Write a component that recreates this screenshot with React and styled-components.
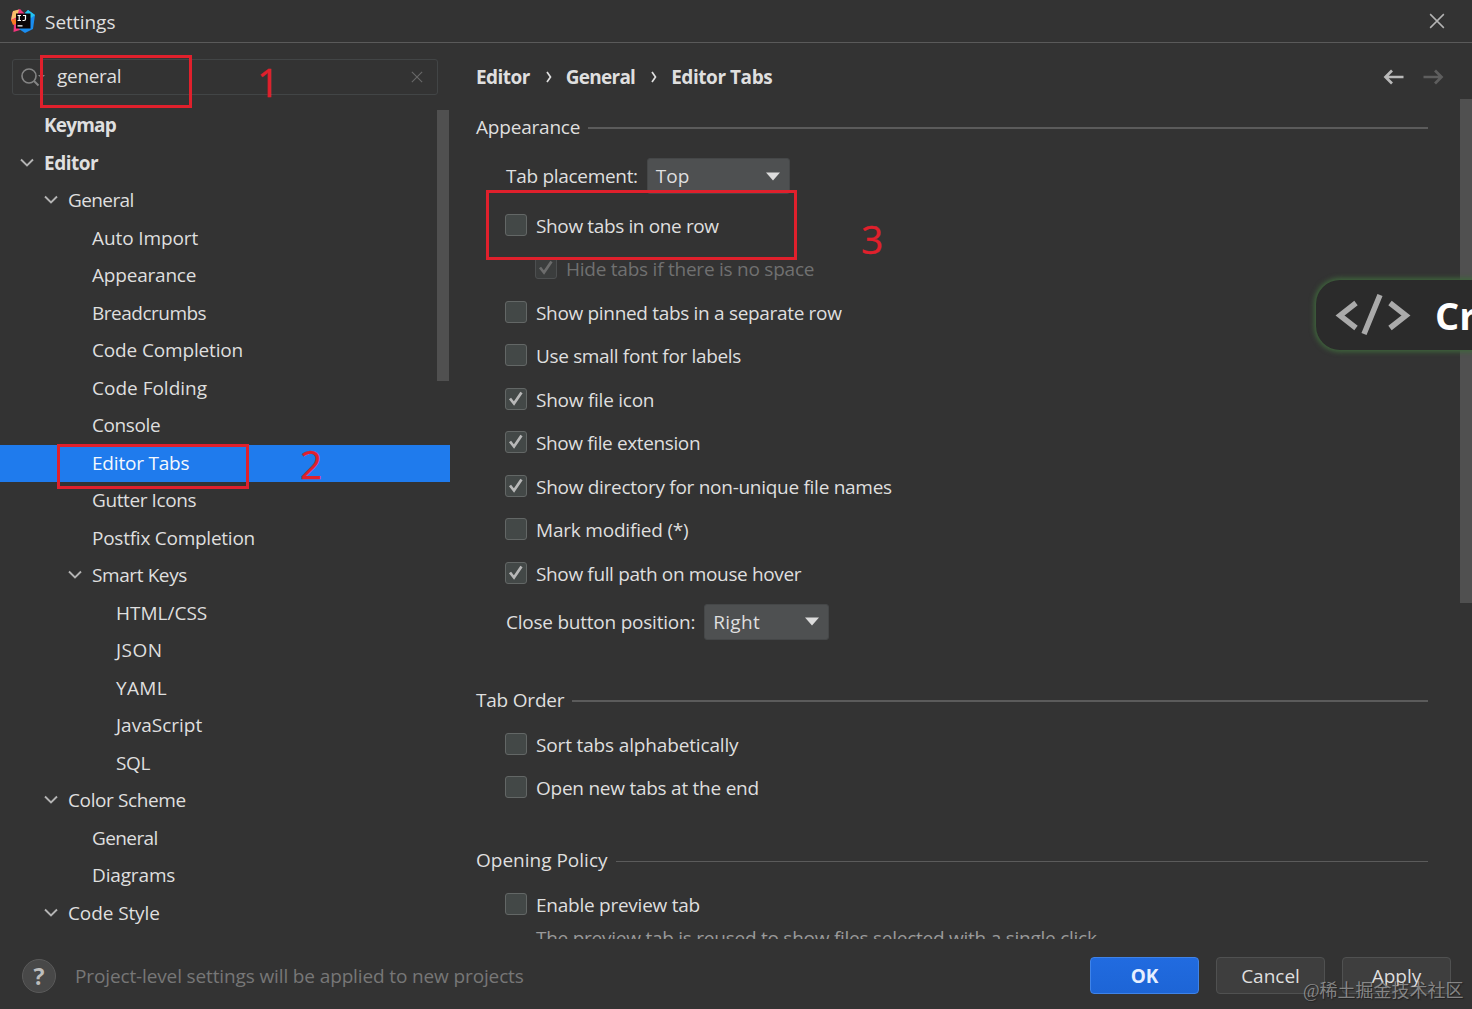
import React from 'react'
import styled, { createGlobalStyle, css } from 'styled-components'

const GlobalStyle = createGlobalStyle`
* { box-sizing: border-box; }
body {
margin: 0;
background: #333333;
color: #dfdfdf;
font-family: "Open Sans", "Noto Sans", sans-serif;
font-size: 19px;
}
`

const Window = styled.div`
position: relative;
display: flex;
flex-direction: column;
width: 1472px;
height: 1009px;
overflow: hidden;
background: #333333;
white-space: nowrap;
`
const TitleBar = styled.div`
display: flex;
align-items: center;
height: 43px;
padding: 0 27px 0 11px;
border-bottom: 1px solid #5a5a5a;
`
const Title = styled.div`
flex: 1;
padding: 2px 0 0 10px;
`
const Label = styled.span`
letter-spacing: ${p => p.$track || 0}px;
`
const Body = styled.div`
display: flex;
height: 896px;
`
const Sidebar = styled.div`
position: relative;
width: 450px;
padding-top: 16px;
`
const Search = styled.div`
display: flex;
align-items: center;
width: 426px;
height: 36px;
margin: 0 0 12px 12px;
padding: 0 14px 0 7px;
border: 1px solid #424546;
border-radius: 3px;
`
const Query = styled.div`
flex: 1;
padding: 0 0 2px 11px;
letter-spacing: -0.3px;
`
const TreeRow = styled.div`
display: flex;
align-items: center;
height: 37.5px;
padding: 0 0 1px ${p => 20 + p.$level * 24}px;
font-weight: ${p => p.$level === 0 ? 700 : 400};
${p => p.$selected && css`
background: #1f7bed;
color: #f4f8fd;
`}
`
const Toggle = styled.div`
display: flex;
width: 24px;
`
const Scrollbar = styled.div`
position: absolute;
top: ${p => p.$top}px;
right: ${p => p.$right}px;
width: 12px;
height: ${p => p.$height}px;
background: #505050;
`
const Content = styled.div`
position: relative;
flex: 1;
padding: 0 44px 0 26px;
overflow: hidden;
`
const Crumbs = styled.div`
display: flex;
align-items: center;
height: 68px;
font-weight: 700;
`
const CrumbSep = styled.div`
display: flex;
justify-content: center;
width: 36px;
padding-left: 2px;
`
const NavButtons = styled.div`
display: flex;
gap: 19px;
margin: 0 -16px 0 auto;
`
const SectionTitle = styled.div`
display: flex;
align-items: center;
height: 32px;
margin: ${p => p.$gap || 0}px 0 ${p => p.$after}px;
&::after {
content: '';
flex: 1;
height: ${p => p.$line}px;
margin: ${p => 4 - p.$line}px 0 0 8px;
background: #5b5b5b;
}
`
const Field = styled.div`
display: flex;
align-items: center;
height: 36px;
margin: ${p => p.$gap}px 0 ${p => p.$after || 0}px;
padding-left: 30px;
`
const Select = styled.div`
display: flex;
align-items: center;
justify-content: space-between;
width: ${p => p.$width}px;
height: 36px;
margin-left: 9px;
padding: 0 9px 0 8px;
border: 1px solid #454748;
border-radius: 3px;
background: #4e5051;
`
const Option = styled.div`
display: flex;
align-items: center;
height: 43.5px;
padding-left: ${p => p.$nested ? 59 : 29}px;
color: ${p => p.$disabled ? '#707070' : '#dfdfdf'};
`
const Box = styled.div`
display: flex;
width: 22px;
height: 22px;
margin: -2px 9px 0 0;
border: 1.5px solid ${p => p.$disabled ? '#4d4f50' : '#636766'};
border-radius: 3px;
background: ${p => p.$disabled ? '#3b3d3d' : '#434847'};
`
const Hint = styled.div`
padding-left: 60px;
color: #9a9a9a;
letter-spacing: -0.25px;
line-height: 22px;
`
const Footer = styled.div`
display: flex;
align-items: center;
height: 70px;
padding: 3px 21px 0 22px;
`
const Help = styled.div`
display: flex;
align-items: center;
justify-content: center;
width: 34px;
height: 34px;
border: 1px solid #5a5a5a;
border-radius: 50%;
background: #484848;
color: #bdbdbd;
font-size: 23px;
font-weight: 700;
`
const Note = styled.div`
flex: 1;
padding-left: 19px;
color: #777777;
letter-spacing: -0.13px;
`
const Button = styled.div`
display: flex;
align-items: center;
justify-content: center;
width: 109px;
height: 37px;
margin-left: 17px;
border: 1px solid ${p => p.$primary ? '#3f83e8' : '#505151'};
border-radius: 4px;
background: ${p => p.$primary ? 'linear-gradient(#216be0, #1d65d6)' : '#3e3e3e'};
color: ${p => p.$primary ? '#e6efff' : '#dfdfdf'};
font-weight: ${p => p.$primary ? 700 : 400};
`
const Mark = styled.div`
position: absolute;
left: ${p => p.$x}px;
top: ${p => p.$y}px;
width: ${p => p.$w}px;
height: ${p => p.$h}px;
border: 3px solid #e0202c;
`
const Digit = styled.div`
position: absolute;
left: ${p => p.$x}px;
top: ${p => p.$y}px;
color: #e0202c;
font-size: 39px;
line-height: 50px;
-webkit-text-stroke: 0.3px #e0202c;
`
const Badge = styled.div`
position: absolute;
left: 1316px;
top: 280px;
display: flex;
align-items: center;
gap: 24px;
width: 190px;
height: 70px;
padding-left: 19px;
border-radius: 24px;
background: #2b2b2b;
box-shadow: 0 0 5px 2px #3f663c;
color: #ffffff;
font-size: 38px;
font-weight: 700;
`
const Watermark = styled.div`
position: absolute;
left: 1303px;
top: 978px;
color: rgba(190, 190, 190, 0.62);
font-family: "Liberation Serif", "Noto Sans CJK SC", sans-serif;
font-size: 18px;
line-height: 26px;
text-shadow: 1px 1px 1px #222222;
`

const TREE = [
    { label: 'Keymap', level: 0, track: -0.8 },
    { label: 'Editor', level: 0, track: -0.5, open: true },
    { label: 'General', level: 1, track: -0.6, open: true },
    { label: 'Auto Import', level: 2, track: -0.1 },
    { label: 'Appearance', level: 2, track: -0.2 },
    { label: 'Breadcrumbs', level: 2, track: -0.5 },
    { label: 'Code Completion', level: 2, track: -0.15 },
    { label: 'Code Folding', level: 2 },
    { label: 'Console', level: 2, track: -0.4 },
    { label: 'Editor Tabs', level: 2, track: -0.2, selected: true },
    { label: 'Gutter Icons', level: 2, track: -0.4 },
    { label: 'Postfix Completion', level: 2, track: -0.25 },
    { label: 'Smart Keys', level: 2, track: -0.4, open: true },
    { label: 'HTML/CSS', level: 3 },
    { label: 'JSON', level: 3, track: 0.5 },
    { label: 'YAML', level: 3, track: 0.3 },
    { label: 'JavaScript', level: 3 },
    { label: 'SQL', level: 3, track: -0.3 },
    { label: 'Color Scheme', level: 1, track: -0.38, open: true },
    { label: 'General', level: 2, track: -0.6 },
    { label: 'Diagrams', level: 2, track: -0.15 },
    { label: 'Code Style', level: 1, track: -0.1, open: true },
]

const APPEARANCE = [
    { label: 'Show tabs in one row', track: -0.37 },
    { label: 'Hide tabs if there is no space', track: -0.24, checked: true, disabled: true },
    { label: 'Show pinned tabs in a separate row', track: -0.32 },
    { label: 'Use small font for labels', track: -0.34 },
    { label: 'Show file icon', track: -0.25, checked: true },
    { label: 'Show file extension', track: -0.38, checked: true },
    { label: 'Show directory for non-unique file names', track: -0.28, checked: true },
    { label: 'Mark modified (*)', track: -0.2 },
    { label: 'Show full path on mouse hover', track: -0.36, checked: true },
]

const Logo = () => (
    <svg width="24" height="24" viewBox="0 0 24 24">
        <path d="M1.500 3L9 0L14 5L9 21L2.500 23L3 15L0 11Z" fill="#f0357c" />
        <path d="M2 2L8 0.500L6 8L0 11Z" fill="#f9c069" />
        <path d="M0 11L5 10V15L2 16Z" fill="#fb7a24" />
        <path d="M14 4L17 1L24 6L22 20L14 24L8 20Z" fill="#1a8df0" />
        <path d="M14 4L17 1L24 6L20 9Z" fill="#25c4ee" />
        <rect x="5" y="4.500" width="14.500" height="15" fill="#0b0508" />
        <path d="M6.500 6.500H10M8.200 6.500V11.500M6.500 11.500H10M12 6.500H14.500V10Q14.500 11.500 13 11.500H11.500M6.500 16.800H11.500" stroke="#fff" strokeWidth="1.200" fill="none" />
    </svg>
)
const Chevron = () => (
    <svg width="14" height="10" viewBox="0 0 14 10">
        <path d="M1 1.500L7 7.500L13 1.500" stroke="#b4b4b4" strokeWidth="1.900" fill="none" />
    </svg>
)
const Cross = ({ size, color }) => (
    <svg width={size} height={size} viewBox="0 0 14 14">
        <path d="M1 1L13 13M13 1L1 13" stroke={color} strokeWidth="1.300" />
    </svg>
)
const Separator = () => (
    <svg width="6" height="12" viewBox="0 0 6 12">
        <path d="M1 1L4.500 6L1 11" stroke="#dfdfdf" strokeWidth="1.700" fill="none" />
    </svg>
)
const Arrow = ({ color, flip }) => (
    <svg width="21" height="16" viewBox="0 0 21 16" transform={flip ? 'scale(-1 1)' : undefined}>
        <path d="M20.500 8H3M9 1.500L2.500 8L9 14.500" stroke={color} strokeWidth="2.700" fill="none" />
    </svg>
)
const Caret = () => (
    <svg width="14" height="9" viewBox="0 0 14 9">
        <path d="M0 0.500H14L7 8.500Z" fill="#dcdcdc" />
    </svg>
)
const CheckOption = ({ label, track, checked, disabled }) => (
    <Option $nested={disabled} $disabled={disabled}>
        <Box $disabled={disabled}>
            {checked ? <svg width="19" height="19" viewBox="0 0 19 19">
                <path d="M4 9.500L8 14.500L15.500 3.500" stroke={disabled ? '#6c6c6c' : '#b8b8b8'} strokeWidth="2.700" fill="none" />
            </svg> : ''}
        </Box>
        <Label $track={track}>{label}</Label>
    </Option>
)

const App = () => {
    return (
        <Window>
            <GlobalStyle />
            <TitleBar>
                <Logo />
                <Title>Settings</Title>
                <Cross size={16} color="#b4b4b4" />
            </TitleBar>
            <Body>
                <Sidebar>
                    <Search>
                        <svg width="26" height="20" viewBox="0 0 26 20">
                            <circle cx="9" cy="9" r="7" stroke="#858585" strokeWidth="1.600" fill="none" />
                            <path d="M14 14L18.500 18.500" stroke="#858585" strokeWidth="2" />
                            <path d="M18 8H25L21.500 11.500Z" fill="#858585" />
                        </svg>
                        <Query>general</Query>
                        <Cross size={12} color="#686868" />
                    </Search>
                    {TREE.map((item, i) => (
                        <TreeRow key={i} $level={item.level} $selected={item.selected}>
                            <Toggle>{item.open ? <Chevron /> : ''}</Toggle>
                            <Label $track={item.track}>{item.label}</Label>
                        </TreeRow>
                    ))}
                    <Scrollbar $top={67} $right={1} $height={271} />
                </Sidebar>
                <Content>
                    <Crumbs>
                        <Label $track={-0.55}>Editor</Label>
                        <CrumbSep><Separator /></CrumbSep>
                        <Label $track={-0.75}>General</Label>
                        <CrumbSep><Separator /></CrumbSep>
                        <Label $track={-0.45}>Editor Tabs</Label>
                        <NavButtons>
                            <Arrow color="#b9b9b9" />
                            <Arrow color="#5e5e5e" flip />
                        </NavButtons>
                    </Crumbs>
                    <SectionTitle $line={2} $after={0}><Label $track={-0.2}>Appearance</Label></SectionTitle>
                    <Field $gap={15} $after={10}>
                        <Label $track={-0.3}>Tab placement:</Label>
                        <Select $width={143}><span>Top</span><Caret /></Select>
                    </Field>
                    {APPEARANCE.map(item => <CheckOption key={item.label} {...item} />)}
                    <Field $gap={8}>
                        <Label $track={-0.23}>Close button position:</Label>
                        <Select $width={125}><Label $track={0.3}>Right</Label><Caret /></Select>
                    </Field>
                    <SectionTitle $gap={44} $line={2} $after={7.5}><Label $track={-0.2}>Tab Order</Label></SectionTitle>
                    <CheckOption label="Sort tabs alphabetically" track={-0.15} />
                    <CheckOption label="Open new tabs at the end" track={-0.25} />
                    <SectionTitle $gap={33.5} $line={1} $after={8}><span>Opening Policy</span></SectionTitle>
                    <CheckOption label="Enable preview tab" track={-0.25} />
                    <Hint>The preview tab is reused to show files selected with a single click</Hint>
                    <Scrollbar $top={56} $right={0} $height={504} />
                </Content>
            </Body>
            <Footer>
                <Help>?</Help>
                <Note>Project-level settings will be applied to new projects</Note>
                <Button $primary>OK</Button>
                <Button>Cancel</Button>
                <Button>Apply</Button>
            </Footer>
            <Badge>
                <svg width="76" height="42" viewBox="0 0 76 42">
                    <path d="M21 9L5 21.500L21 34M55 9L71 21.500L55 34M45 1L29 40" stroke="#aaaaaa" strokeWidth="5.500" fill="none" />
                </svg>
                Cr
            </Badge>
            <Mark $x={40} $y={55} $w={152} $h={53} />
            <Mark $x={57} $y={444} $w={192} $h={45} />
            <Mark $x={486} $y={190} $w={311} $h={70} />
            <Digit $x={257} $y={57}>1</Digit>
            <Digit $x={300} $y={439}>2</Digit>
            <Digit $x={861} $y={214}>3</Digit>
            <Watermark>@稀土掘金技术社区</Watermark>
        </Window>
    )
}

export default App;
